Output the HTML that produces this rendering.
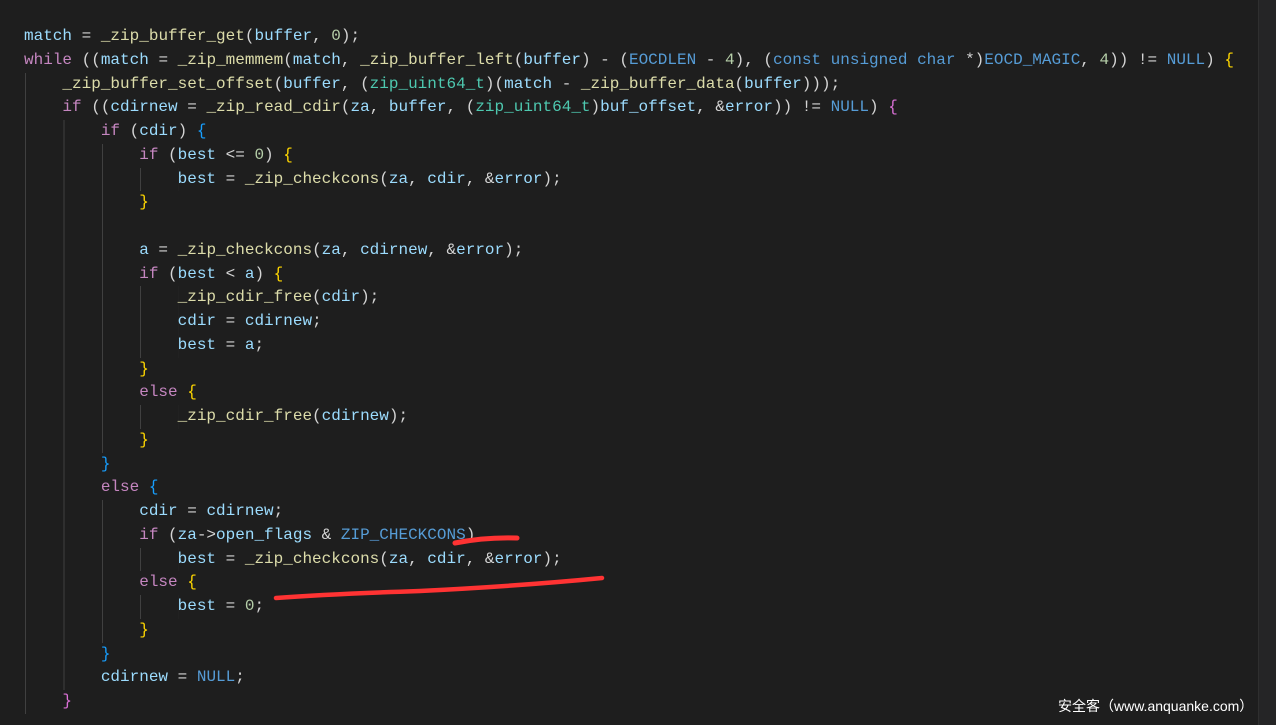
<!DOCTYPE html>
<html><head><meta charset="utf-8"><style>
html,body{margin:0;padding:0;background:#1e1e1e;width:1276px;height:725px;overflow:hidden;position:relative}
#code{position:absolute;left:24px;top:25px;font-family:"Liberation Mono",monospace;font-size:16px;color:#d4d4d4}
.l{height:23.75px;line-height:23.75px;white-space:pre;background-repeat:no-repeat;background-position:1px 0}
.i1,.i2,.i3,.i4{background-image:repeating-linear-gradient(to right,#404040 0 1px,transparent 1px 38.4px)}
.i1{background-size:38.4px 100%}.i2{background-size:76.8px 100%}.i3{background-size:115.2px 100%}.i4{background-size:153.6px 100%}
.k{color:#c586c0}.f{color:#dcdcaa}.v{color:#9cdcfe}.n{color:#b5cea8}.t{color:#4ec9b0}.c{color:#569cd6}.g{color:#ffd700}.p{color:#da70d6}.b{color:#179fff}
#mm{position:absolute;left:1258px;top:0;width:18px;height:725px;background:#252526;border-left:1px solid #2f2f2f}
#wm{position:absolute;left:1058px;top:696px;font-family:"Liberation Sans","Noto Sans CJK SC",sans-serif;font-size:14px;color:#fff}
</style></head><body>
<div id="code"><div class="l"><span class="v">match</span> = <span class="f">_zip_buffer_get</span>(<span class="v">buffer</span>, <span class="n">0</span>);</div><div class="l"><span class="k">while</span> ((<span class="v">match</span> = <span class="f">_zip_memmem</span>(<span class="v">match</span>, <span class="f">_zip_buffer_left</span>(<span class="v">buffer</span>) - (<span class="c">EOCDLEN</span> - <span class="n">4</span>), (<span class="c">const</span> <span class="c">unsigned</span> <span class="c">char</span> *)<span class="c">EOCD_MAGIC</span>, <span class="n">4</span>)) != <span class="c">NULL</span>) <span class="g">{</span></div><div class="l i1">    <span class="f">_zip_buffer_set_offset</span>(<span class="v">buffer</span>, (<span class="t">zip_uint64_t</span>)(<span class="v">match</span> - <span class="f">_zip_buffer_data</span>(<span class="v">buffer</span>)));</div><div class="l i1">    <span class="k">if</span> ((<span class="v">cdirnew</span> = <span class="f">_zip_read_cdir</span>(<span class="v">za</span>, <span class="v">buffer</span>, (<span class="t">zip_uint64_t</span>)<span class="v">buf_offset</span>, &amp;<span class="v">error</span>)) != <span class="c">NULL</span>) <span class="p">{</span></div><div class="l i2">        <span class="k">if</span> (<span class="v">cdir</span>) <span class="b">{</span></div><div class="l i3">            <span class="k">if</span> (<span class="v">best</span> &lt;= <span class="n">0</span>) <span class="g">{</span></div><div class="l i4">                <span class="v">best</span> = <span class="f">_zip_checkcons</span>(<span class="v">za</span>, <span class="v">cdir</span>, &amp;<span class="v">error</span>);</div><div class="l i3">            <span class="g">}</span></div><div class="l i3"> </div><div class="l i3">            <span class="v">a</span> = <span class="f">_zip_checkcons</span>(<span class="v">za</span>, <span class="v">cdirnew</span>, &amp;<span class="v">error</span>);</div><div class="l i3">            <span class="k">if</span> (<span class="v">best</span> &lt; <span class="v">a</span>) <span class="g">{</span></div><div class="l i4">                <span class="f">_zip_cdir_free</span>(<span class="v">cdir</span>);</div><div class="l i4">                <span class="v">cdir</span> = <span class="v">cdirnew</span>;</div><div class="l i4">                <span class="v">best</span> = <span class="v">a</span>;</div><div class="l i3">            <span class="g">}</span></div><div class="l i3">            <span class="k">else</span> <span class="g">{</span></div><div class="l i4">                <span class="f">_zip_cdir_free</span>(<span class="v">cdirnew</span>);</div><div class="l i3">            <span class="g">}</span></div><div class="l i2">        <span class="b">}</span></div><div class="l i2">        <span class="k">else</span> <span class="b">{</span></div><div class="l i3">            <span class="v">cdir</span> = <span class="v">cdirnew</span>;</div><div class="l i3">            <span class="k">if</span> (<span class="v">za</span>-&gt;<span class="v">open_flags</span> &amp; <span class="c">ZIP_CHECKCONS</span>)</div><div class="l i4">                <span class="v">best</span> = <span class="f">_zip_checkcons</span>(<span class="v">za</span>, <span class="v">cdir</span>, &amp;<span class="v">error</span>);</div><div class="l i3">            <span class="k">else</span> <span class="g">{</span></div><div class="l i4">                <span class="v">best</span> = <span class="n">0</span>;</div><div class="l i3">            <span class="g">}</span></div><div class="l i2">        <span class="b">}</span></div><div class="l i2">        <span class="v">cdirnew</span> = <span class="c">NULL</span>;</div><div class="l i1">    <span class="p">}</span></div></div>
<svg width="1276" height="725" style="position:absolute;left:0;top:0">
<path d="M455 543 Q485 537 517 538" stroke="#ff3333" stroke-width="5" fill="none" stroke-linecap="round"/>
<path d="M276 598 Q330 594 420 591 Q520 586 602 578" stroke="#ff3333" stroke-width="4.5" fill="none" stroke-linecap="round"/>
</svg>
<div id="mm"></div>
<div id="wm">安全客（www.anquanke.com）</div>
</body></html>
